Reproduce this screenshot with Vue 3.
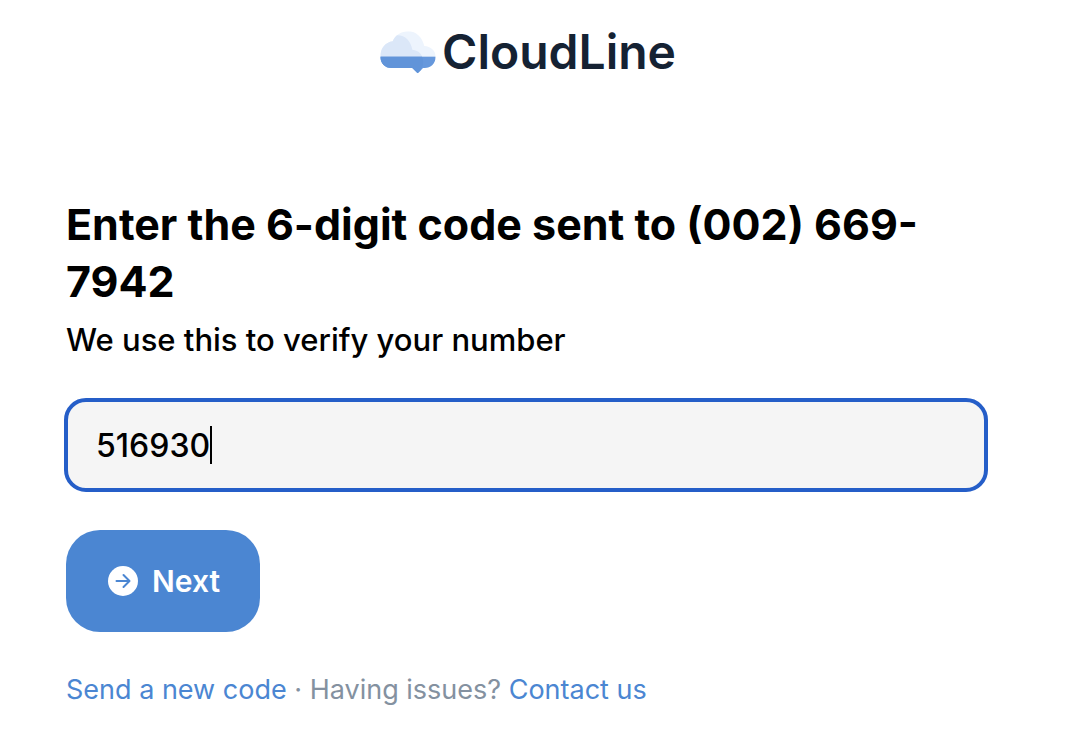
<script setup>
import { ref, onMounted } from "vue";

const phone     = ref("(002) 669-7942");
const code      = ref("516930");
const codeInput = ref(null);

const cleanCode = () => {
  code.value = code.value.replace(/\D/g, "").slice(0, 6);
}
const resetCode = () => {
  code.value = "";
  codeInput.value.focus();
}

onMounted(() => codeInput.value.focus());
</script>

<template>
  <div class="verify">
    <header class="brand">
      <svg class="brand-icon" viewBox="0 0 168 129" aria-hidden="true">
        <defs>
          <clipPath id="cloud">
            <path d="M1 77C1 52 16 34 38 31C46 12 64 1 85 1C108 1 126 18 133 45C152 46 167 59 167 77C167 97 152 111 134 111H129L113 127L97 111H35C14 111 1 95 1 77Z" />
          </clipPath>
        </defs>
        <g clip-path="url(#cloud)">
          <rect width="168" height="129" fill="#edf4fd" />
          <path d="M0 129V20L46 13C72 9 93 28 97 56C117 58 130 72 130 92C130 99 128 106 124 111V129Z" fill="#dbe7f8" />
          <rect y="77" width="168" height="52" fill="#6698dc" />
          <path d="M0 77H126C131 88 131 101 124 111V129H0Z" fill="#6194d9" />
        </g>
      </svg>
      <span class="brand-name">CloudLine</span>
    </header>

    <form @submit.prevent>
      <h1 class="title">Enter the 6-digit code sent to {{ phone }}</h1>
      <label class="subtitle" for="txtCode">We use this to verify your number</label>

      <div class="code-field">
        <input type="text" id="txtCode" class="code-input" ref="codeInput" inputmode="numeric" autocomplete="one-time-code" v-model="code" @input="cleanCode">
        <span class="caret" aria-hidden="true"><span class="caret-offset">{{ code }}</span></span>
      </div>

      <button type="submit" class="btn-next">
        <svg class="btn-icon" viewBox="0 0 30 30" aria-hidden="true">
          <circle cx="15" cy="15" r="15" fill="#fff" />
          <path d="M8.5 15H21M15.5 9L21.5 15L15.5 21" fill="none" stroke="#4b86d2" stroke-width="2" stroke-linecap="round" stroke-linejoin="round" />
        </svg>
        <span>Next</span>
      </button>
    </form>

    <p class="help">
      <a href="#" @click.prevent="resetCode">Send a new code</a> · Having issues? <a href="#">Contact us</a>
    </p>
  </div>
</template>

<style>
body {
  margin: 0;
  background: #fff;
}
</style>

<style scoped>
.verify {
  box-sizing: border-box;
  padding: 24px 100px 36px 66px;
  color: #000;
  font-family: Inter, "Liberation Sans", sans-serif;
}
.brand {
  display: flex;
  align-items: center;
  justify-content: center;
  gap: 6px;
  margin-bottom: 116px;
  padding-left: 4px;
}
.brand-icon {
  width: 56px;
  height: 43px;
}
.brand-name {
  color: #152233;
  font-size: 48px;
  font-weight: 600;
  line-height: 56px;
}
.title {
  margin: 0;
  font-size: 43px;
  font-weight: 700;
  line-height: 57px;
}
.subtitle {
  display: block;
  margin-top: 8px;
  font-size: 31px;
  font-weight: 500;
  line-height: 44px;
}
.code-field {
  position: relative;
  margin: 36px -2px 38px;
}
.code-input {
  box-sizing: border-box;
  display: block;
  width: 100%;
  height: 94px;
  padding: 0 28px;
  border: 4px solid #255ec8;
  border-radius: 22px;
  outline: none;
  background: #f5f5f5;
  color: #000;
  caret-color: transparent;
  font-family: inherit;
  font-size: 32px;
  font-weight: 500;
}
.caret {
  position: absolute;
  top: 28px;
  left: 32px;
  height: 38px;
  border-right: 2px solid #000;
  font-size: 32px;
  font-weight: 500;
  pointer-events: none;
}
.code-field:not(:focus-within) .caret {
  display: none;
}
.caret-offset {
  visibility: hidden;
}
.btn-next {
  display: flex;
  align-items: center;
  gap: 14px;
  padding: 29px 40px 29px 42px;
  border: 0;
  border-radius: 34px;
  background: #4b86d2;
  color: #fff;
  cursor: pointer;
  font-family: inherit;
  font-size: 30px;
  font-weight: 600;
  line-height: 44px;
}
.btn-icon {
  width: 30px;
  height: 30px;
}
.help {
  margin: 40px 0 0;
  color: #8491a0;
  font-size: 27px;
  line-height: 36px;
}
.help a {
  color: #4b86d2;
  text-decoration: none;
}
</style>
